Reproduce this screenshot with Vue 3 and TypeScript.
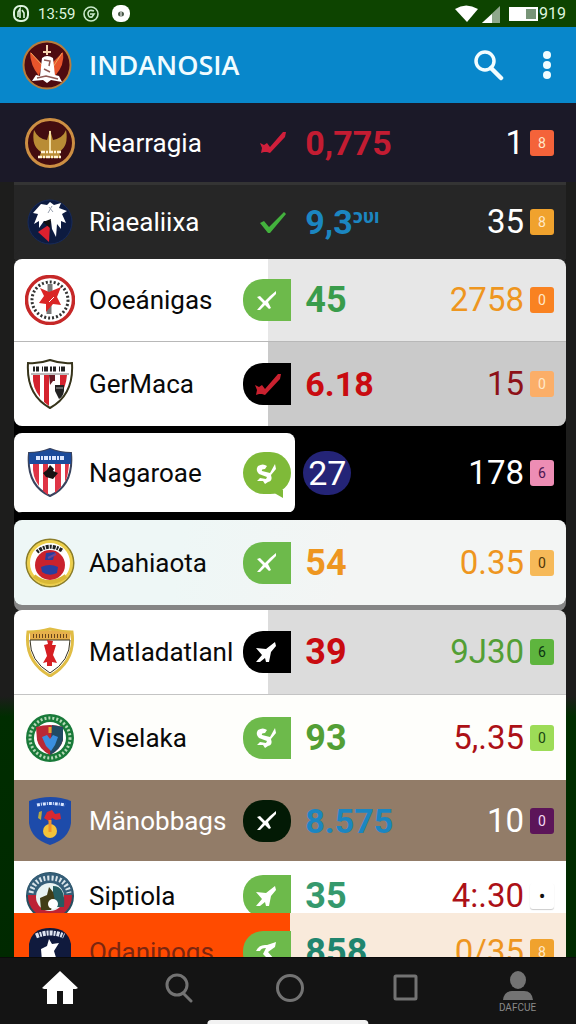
<script setup lang="ts">
type Mark = 'check' | 'cross' | 'tick' | 'scribble' | 'swirl' | 'open'
interface Row {
  id: string
  name: string
  crest: string
  badge: string
  mark: Mark
  value: string
  sup?: string
  valueTone: string
  amount: string
  amountTone: string
  chip: string
  chipTone: string
}

const lead: Row = {
  id: 'r1', name: 'Nearragia', crest: 'garuda', badge: 'bare-red', mark: 'check', value: '0,775',
  valueTone: 'crimson', amount: '1', amountTone: 'white', chip: '8', chipTone: 'coral',
}

const rows: Row[] = [
  { id: 'r2', name: 'Riaealiixa', crest: 'eagle', badge: 'bare-green', mark: 'tick', value: '9,3', sup: 'ɔυı', valueTone: 'blue', amount: '35', amountTone: 'white', chip: '8', chipTone: 'amber' },
  { id: 'r3', name: 'Ooeánigas', crest: 'redring', badge: 'green', mark: 'cross', value: '45', valueTone: 'green', amount: '2758', amountTone: 'orange', chip: '0', chipTone: 'orange-chip' },
  { id: 'r4', name: 'GerMaca', crest: 'stripes', badge: 'black', mark: 'check', value: '6.18', valueTone: 'red', amount: '15', amountTone: 'maroon', chip: '0', chipTone: 'peach' },
  { id: 'r5', name: 'Nagaroae', crest: 'bluestripes', badge: 'bubble', mark: 'swirl', value: '27', valueTone: 'disc', amount: '178', amountTone: 'white', chip: '6', chipTone: 'pink' },
  { id: 'r6', name: 'Abahiaota', crest: 'goldring', badge: 'green', mark: 'cross', value: '54', valueTone: 'orange', amount: '0.35', amountTone: 'orange', chip: '0', chipTone: 'gold' },
  { id: 'r7', name: 'Matladatlanl', crest: 'goldshield', badge: 'black', mark: 'scribble', value: '39', valueTone: 'red', amount: '9J30', amountTone: 'leaf', chip: '6', chipTone: 'green-chip' },
  { id: 'r8', name: 'Viselaka', crest: 'greenring', badge: 'green', mark: 'swirl', value: '93', valueTone: 'leaf', amount: '5,.35', amountTone: 'maroon', chip: '0', chipTone: 'lime' },
  { id: 'r9', name: 'Mänobbags', crest: 'blueshield', badge: 'pill', mark: 'cross', value: '8.575', valueTone: 'blue', amount: '10', amountTone: 'white', chip: '0', chipTone: 'purple' },
  { id: 'r10', name: 'Siptiola', crest: 'crown', badge: 'green', mark: 'scribble', value: '35', valueTone: 'teal', amount: '4:.30', amountTone: 'maroon', chip: '•', chipTone: 'blank' },
  { id: 'r11', name: 'Odanipogs', crest: 'navy', badge: 'green', mark: 'open', value: '858', valueTone: 'teal', amount: '0/35', amountTone: 'orange', chip: '8', chipTone: 'amber' },
]

const marks: Record<Mark, string> = {
  tick: 'M2 13 L6 11 L11 17 L26 2 L28 4 L12 23 L10 23 Z',
  check: 'M2 13 L6 15 L9 13 L12 17 L25 2 L28 2 L27 7 L12 23 L9 22 L6 22 L3 23 L4 18 Z',
  cross: 'M4 9 L7 8 L12 13 L17 8 L23 3 L23 6 L15 14 L18 20 L16 21 L12 17 L7 22 L4 22 L10 15 Z',
  scribble: 'M3 8 L13 9 L22 2 L23 6 L18 12 L16 22 L13 22 L12 18 L7 22 L3 22 L9 15 Z',
  swirl: 'M5 5 Q10 2 14 5 L12 8 Q8 8 9 10 L17 12 L22 3 L23 8 L18 14 Q20 20 15 21 L12 23 L10 20 L4 20 L7 17 L13 18 L14 16 L6 13 Q2 9 5 5 Z',
  open: 'M3 11 Q6 4 14 5 L23 2 L22 7 L15 12 L21 19 L19 23 L10 14 L13 8 Q8 8 7 11 Z',
}

const all = [lead, ...rows]
const isLong = (row: Row) => /[.,]/.test(row.value)
</script>

<template>
  <div class="screen">
    <header class="status">
      <div class="status-group">
        <svg width="18" height="18" viewBox="0 0 18 18" aria-hidden="true">
          <rect x="2" y="1" width="14" height="15" rx="6" fill="none" stroke="#dff5df" stroke-width="2" />
          <path d="M6 12 V7 L8 4 V13 M10 5 L12 8 V13" fill="none" stroke="#dff5df" stroke-width="1.6" />
        </svg>
        <span class="clock">13:59</span>
        <svg width="18" height="18" viewBox="0 0 18 18" aria-hidden="true">
          <circle cx="9" cy="9" r="7" fill="none" stroke="#c9e8c9" stroke-width="1.6" />
          <path d="M12 6 Q7 4 6 8 Q6 13 10 12 L12 9 H8" fill="none" stroke="#c9e8c9" stroke-width="1.6" />
        </svg>
        <svg class="dot" width="18" height="18" viewBox="0 0 18 18" aria-hidden="true">
          <rect width="18" height="17" rx="8" fill="#fff" />
          <ellipse cx="9" cy="9" rx="3" ry="2.5" fill="#4a5a4a" />
          <path d="M9 7 V11" stroke="#fff" />
        </svg>
      </div>
      <div class="status-group right">
        <svg width="46" height="20" viewBox="0 0 46 20" aria-hidden="true">
          <path d="M0 5 Q11 -2 23 5 L12 18 Z" fill="#fff" />
          <path d="M27 19 L45 2 V19 Z" fill="#8fa88c" />
          <path d="M27 19 L37 10 V19 Z" fill="#fff" />
        </svg>
        <svg class="battery" width="30" height="14" viewBox="0 0 30 14" aria-hidden="true">
          <rect x="1" y="1" width="27" height="12" fill="#779477" stroke="#fff" stroke-width="2" />
          <rect x="1" y="1" width="16" height="12" fill="#fff" />
        </svg>
        <span class="percent">919</span>
      </div>
    </header>

    <header class="appbar">
      <svg class="crest" viewBox="0 0 50 50" aria-hidden="true">
        <circle cx="25" cy="25" r="23.5" fill="#4e0b10" stroke="#b77d3e" stroke-width="2" />
        <path d="M8 12 L20 24 L17 36 Q8 25 8 12 Z M41 12 L31 22 L33 36 Q43 25 41 12 Z" fill="#e8552c" />
        <path d="M9 13 L20 25 M40 13 L31 27" stroke="#eda55c" />
        <path d="M25 5 V15 M21 12 H29" stroke="#f5d4b0" stroke-width="2" />
        <path d="M20 18 Q25 14 31 18 L33 35 L37 36 L40 42 L29 40 L25 43 L21 40 L10 41 L14 35 L18 36 Z" fill="#fff" />
        <path d="M22 20 L28 21 L27 26 M15 38 L24 36 L36 39 M22 29 L28 32" fill="none" stroke="#8e5a55" stroke-width="1.5" />
      </svg>
      <h1>INDANOSIA</h1>
      <button class="icon-button" aria-label="Search">
        <svg width="32" height="32" viewBox="0 0 32 32" aria-hidden="true">
          <circle cx="12" cy="12" r="9" fill="none" stroke="#f2fdff" stroke-width="3.5" />
          <path d="M18 19 L28 29" stroke="#f2fdff" stroke-width="4.5" stroke-linecap="round" />
        </svg>
      </button>
      <button class="icon-button more" aria-label="More options">
        <svg width="10" height="30" viewBox="0 0 10 30" aria-hidden="true">
          <circle cx="5" cy="5" r="4" fill="#f2fdff" /><circle cx="5" cy="15" r="4" fill="#f2fdff" /><circle cx="5" cy="25" r="4" fill="#f2fdff" />
        </svg>
      </button>
    </header>

    <main class="list">
      <section v-for="row in all" :key="row.id" class="row" :class="row.id">
        <div class="cells">
          <svg class="crest" viewBox="0 0 50 50" aria-hidden="true">
            <g v-if="row.crest === 'garuda'">
              <circle cx="25" cy="25" r="23.5" fill="#430d10" stroke="#cd8f43" stroke-width="3" />
              <path d="M9 12 Q13 21 22 22 L25 12 L28 22 Q38 20 41 12 Q44 28 34 34 L36 40 H14 L16 34 Q6 28 9 12 Z" fill="#b98c35" />
              <path d="M25 13 V34" stroke="#f2dca0" stroke-width="2" />
              <path d="M13 39 H37 M16 34 H36" stroke="#fff3d4" stroke-width="2.5" stroke-dasharray="4 1 2 1" />
            </g>
            <g v-else-if="row.crest === 'eagle'">
              <circle cx="25" cy="25" r="22" fill="#0d1b40" stroke="#172a5a" />
              <path d="M16 7 L22 8 L25 5 L29 8 L36 6 L34 11 L42 14 L37 17 L41 26 L36 24 L36 32 L32 27 L31 40 L27 32 L26 24 L19 24 L14 31 L14 24 L9 27 L13 17 L8 16 Z" fill="#fff" />
              <path d="M13 35 L25 27 L24 45 Z" fill="#dc202e" />
              <path d="M18 25 L26 22 L25 31 Z" fill="#111" />
              <path d="M24 10 L28 15 M27 9 L23 16" stroke="#9aa2b0" />
            </g>
            <g v-else-if="row.crest === 'redring'">
              <circle cx="25" cy="25" r="23.5" fill="#fff" stroke="#c62828" stroke-width="3.5" />
              <circle cx="25" cy="25" r="18" fill="none" stroke="#333" stroke-width="3" stroke-dasharray="2 2" />
              <path d="M25 9 V18 M24 30 V39" stroke="#777" stroke-width="5" />
              <path d="M15 13 L24 17 L36 12 L32 22 L36 30 L28 29 L21 37 L21 29 L14 28 L19 21 Z" fill="#da2525" />
              <path d="M24 27 L29 22" stroke="#fff" />
            </g>
            <g v-else-if="row.crest === 'stripes'">
              <path d="M3 4 Q14 5 25 1 Q36 5 47 4 Q49 36 25 49 Q1 36 3 4 Z" fill="#fff" stroke="#37341b" stroke-width="2" />
              <path d="M8 16 H15 V38 Q7 28 8 16 M19 16 H24 V47 L19 43 Z M35 16 H42 Q41 28 35 37 Z" fill="#d4232e" />
              <path d="M8 10 H42" stroke="#222" stroke-width="5" stroke-dasharray="2 1 3 3 1 1 4 2" /><path d="M6 15 H44" stroke="#777" />
              <path d="M24 16 H30 V22 H28 L25 26 Z" fill="#651923" /><path d="M30 26 H39 V32 Q38 38 34 40 L30 32 Z" fill="#222" />
              <path d="M31 29 H38" stroke="#aaa" />
            </g>
            <g v-else-if="row.crest === 'bluestripes'">
              <path d="M4 5 Q15 5 25 1 Q35 5 46 5 Q49 37 25 48 Q1 37 4 5 Z" fill="#fff" stroke="#39435e" stroke-width="2" />
              <path d="M4 5 Q15 5 25 1 Q35 5 46 5 V16 H4 Z" fill="#1c4b9b" />
              <path d="M8 16 H14 V38 Q7 29 8 16 M18 16 H23 V47 L18 43 M30 16 H36 V39 L30 45 M40 16 H44 Q43 29 40 34 Z" fill="#df3546" />
              <path d="M11 10 H40" stroke="#dbe6ff" stroke-width="4" stroke-dasharray="4 1 2 1" />
              <path d="M25 17 L29 21 L28 23 L33 25 L28 31 L21 29 L18 25 L22 22 Z" fill="#181313" />
            </g>
            <g v-else-if="row.crest === 'goldring'">
              <circle cx="25" cy="25" r="23.5" fill="#fff" stroke="#8b7d29" stroke-width="2" />
              <circle cx="25" cy="25" r="21.5" fill="none" stroke="#edcf4b" stroke-width="3" />
              <path d="M12 14 Q24 4 38 13" fill="none" stroke="#222" stroke-width="4" stroke-dasharray="2 1 3 1" />
              <path d="M9 38 Q24 50 41 38" fill="none" stroke="#d9b836" stroke-width="4" />
              <circle cx="25" cy="27" r="15" fill="#c9222d" />
              <path d="M16 29 Q25 25 33 29 L32 35 Q24 39 17 34 Z M21 15 L30 14 L28 22 L20 22 Z" fill="#283fa0" />
              <path d="M23 20 L31 16" stroke="#6a4796" stroke-width="2" />
            </g>
            <g v-else-if="row.crest === 'goldshield'">
              <path d="M3 5 Q15 5 25 2 Q36 5 47 5 Q51 34 25 49 Q-1 34 3 5 Z" fill="#fff" stroke="#e0bd45" stroke-width="3" />
              <path d="M5 6 Q24 1 46 6 L45 13 H5 Z" fill="#e6b04b" /><path d="M8 9 H42" stroke="#68451b" stroke-width="4" stroke-dasharray="1 2" />
              <path d="M5 13 H45 Q45 34 25 46 Q5 34 5 13 Z" fill="none" stroke="#37321f" />
              <path d="M22 13 L28 14 L27 18 L31 18 L28 28 L32 36 L27 35 L27 39 H22 L22 35 L18 36 L22 29 L19 18 L23 17 Z" fill="#d61e22" />
            </g>
            <g v-else-if="row.crest === 'greenring'">
              <circle cx="25" cy="25" r="24" fill="#197a39" />
              <circle cx="25" cy="25" r="20" fill="none" stroke="#b5d9b6" stroke-width="3" stroke-dasharray="2 2" />
              <circle cx="25" cy="25" r="16" fill="#fff" />
              <path d="M11 14 Q25 10 38 14 V27 Q36 36 25 42 Q14 36 12 27 Z" fill="#b92935" />
              <path d="M27 12 L38 14 V27 Q35 37 25 42 Z" fill="#214a63" />
              <path d="M17 24 L22 22 L25 26 L28 22 L33 24 L30 32 L26 38 L21 33 Z" fill="#3a8fe0" /><path d="M25 14 V20" stroke="#e2ab30" stroke-width="3" />
            </g>
            <g v-else-if="row.crest === 'blueshield'">
              <path d="M4 5 Q26 -3 46 5 V27 Q44 43 25 49 Q6 43 4 27 Z" fill="#1d4baa" />
              <path d="M12 9 Q25 6 40 9" fill="none" stroke="#d8e5ff" stroke-width="3" stroke-dasharray="3 1 1 1" />
              <path d="M22 16 L27 14 L30 18 L35 17 L36 23 L31 24 L27 22 L25 26 L19 22 Z" fill="#da2831" /><ellipse cx="25" cy="35" rx="7" ry="7" fill="#f3c33a" />
              <path d="M14 16 L17 15 L16 24 L13 22 Z" fill="#b9a942" /><path d="M25 24 V36" stroke="#ef922b" stroke-width="3" />
            </g>
            <g v-else-if="row.crest === 'crown'">
              <circle cx="25" cy="25" r="23" fill="#bd2335" stroke="#254e60" stroke-width="2" />
              <path d="M2 24 Q3 2 25 2 Q47 2 48 24 Z" fill="#355e78" />
              <path d="M6 22 Q9 7 25 7 Q41 7 44 22" fill="none" stroke="#dae5ea" stroke-width="5" stroke-dasharray="2 2" />
              <circle cx="25" cy="26" r="14" fill="#e8f3f2" /><path d="M28 15 Q41 15 39 36 H28 Z" fill="#245d62" />
              <path d="M24 16 L28 21 L30 30 L26 39 H16 L15 27 L22 24 Z" fill="#403d17" /><circle cx="28" cy="33" r="5" fill="#fff" />
            </g>
            <g v-else>
              <path d="M4 17 Q7 1 25 1 Q43 1 46 17 V49 H4 Z" fill="#101a3d" />
              <path d="M11 9 Q25 3 39 9" fill="none" stroke="#dfe5f1" stroke-width="5" stroke-dasharray="3 1 2 1" />
              <path d="M24 12 L27 17 L34 16 L29 24 L32 34 H17 L16 22 L22 19 Z" fill="#fff" />
            </g>
          </svg>

          <span class="name">{{ row.name }}</span>

          <span class="badge" :class="row.badge">
            <svg width="28" height="25" viewBox="0 0 28 25" aria-hidden="true">
              <path :d="marks[row.mark]" fill="currentColor" />
            </svg>
          </span>

          <div class="figures">
            <strong class="value" :class="[row.valueTone, { long: isLong(row) }]">{{ row.value }}<sup v-if="row.sup">{{ row.sup }}</sup></strong>
            <span class="amount" :class="row.amountTone">{{ row.amount }}</span>
            <span class="chip" :class="row.chipTone">{{ row.chip }}</span>
          </div>
        </div>
      </section>
    </main>

    <nav class="nav">
      <button class="nav-item" aria-label="Home">
        <svg width="36" height="34" viewBox="0 0 36 34" aria-hidden="true">
          <path d="M18 0 L36 17 L34 18 H31 V33 H21 V20 H15 V33 H5 V18 H2 L0 17 Z" fill="#fff" />
        </svg>
      </button>
      <button class="nav-item" aria-label="Search">
        <svg width="28" height="30" viewBox="0 0 28 30" aria-hidden="true">
          <circle cx="12" cy="12" r="10" fill="none" stroke="#737373" stroke-width="3" />
          <path d="M18 20 L26 28" stroke="#737373" stroke-width="3" stroke-linecap="round" />
        </svg>
      </button>
      <button class="nav-item" aria-label="Record">
        <svg width="28" height="28" viewBox="0 0 28 28" aria-hidden="true"><circle cx="14" cy="14" r="12.5" fill="none" stroke="#737373" stroke-width="3" /></svg>
      </button>
      <button class="nav-item" aria-label="Recent">
        <svg width="26" height="28" viewBox="0 0 26 28" aria-hidden="true"><rect x="2" y="2" width="21" height="23" rx="1" fill="none" stroke="#737373" stroke-width="3" /></svg>
      </button>
      <button class="nav-item profile">
        <svg width="30" height="29" viewBox="0 0 30 29" aria-hidden="true">
          <ellipse cx="15" cy="9" rx="8" ry="9" fill="#737373" />
          <path d="M0 29 Q1 20 9 20 H21 Q29 20 30 29 Z" fill="#737373" />
        </svg>
        <span>DAFCUE</span>
      </button>
      <span class="handle"></span>
    </nav>
  </div>
</template>

<style>
body { margin: 0; background: #141414; }
</style>

<style scoped>
.screen {
  display: flex; flex-direction: column; height: 100vh; overflow: hidden;
  font-family: Roboto, "Noto Sans", sans-serif;
  background: linear-gradient(#1d1d1c 0, #1d1d1c 68%, #002d00 70%, #002800 100%);
}
button { border: 0; padding: 0; margin: 0; background: none; font: inherit; color: inherit; display: flex; align-items: center; justify-content: center; }
svg { display: block; flex: none; }

.status { flex: none; height: 27px; padding: 0 10px 0 12px; display: flex; justify-content: space-between; align-items: center; background: #0d4400; color: #dff5df; }
.status-group { display: flex; align-items: center; height: 23px; gap: 8px; }
.clock { font-size: 15px; width: 35px; line-height: 20px; white-space: nowrap; margin-right: 1px; }
.dot { margin-left: 4px; }
.status-group.right { gap: 0; }
.battery { margin-left: 8px; }
.percent { font-size: 16px; line-height: 20px; }

.appbar { flex: none; height: 76px; padding: 0 20px 0 22px; display: flex; align-items: center; background: #0887cb; }
.crest { width: 50px; height: 50px; }
.appbar h1 { flex: 1; margin: 0 0 0 17px; font-family: "Open Sans", sans-serif; font-size: 27px; font-weight: 600; line-height: 40px; color: #f0fcff; }
.more { margin-left: 33px; padding: 0 4px; }

.list { flex: 1; min-height: 0; overflow: hidden; display: flex; flex-direction: column; }
.row { flex: none; margin: 0 10px 0 14px; overflow: hidden; color: #090909; }
.cells { height: 100%; box-sizing: border-box; padding: 0 12px 0 11px; display: grid; grid-template-columns: 50px minmax(0, 140fr) 48px minmax(0, 248fr); column-gap: 14px; align-items: center; }
.cells > * { grid-row: 1; }
.cells > .crest { grid-column: 1; }
.name { grid-column: 2; font-size: 26px; line-height: 34px; white-space: nowrap; }
.badge { grid-column: 3; }
.figures { grid-column: 4; }

.r1 { height: 79px; margin: 0; padding: 0 10px 0 14px; background: #1b1928; color: #fff; }
.r2 { height: 74px; border-top: 3px solid #343434; background: #262626; color: #fff; }
.r3 { height: 82px; border-bottom: 1px solid #b8b8b8; border-radius: 8px 8px 0 0; background: linear-gradient(90deg, #fff 46%, #e7e7e7 46%); box-shadow: 0 -10px 0 -1px #262626; }
.r4 { height: 84px; border-radius: 0 0 8px 8px; background: linear-gradient(90deg, #fff 46%, #cacaca 46%); box-shadow: 0 10px 0 #000; }
.r5 { height: 94px; background: #000; }
.r5 .cells { height: 80px; margin: 7px 0; }
.r5 .cells::before { content: ""; grid-row: 1; grid-column: 1 / 4; align-self: stretch; margin: 0 -4px 0 -11px; height: 80px; border-radius: 8px; background: #fff; }
.r6 { height: 85px; border-radius: 8px; background: linear-gradient(100deg, #eef7f6 30%, #f3f5f4 60%); box-shadow: 0 6px 0 #858585, 0 -8px 0 #000; }
.r7 { height: 84px; margin-top: 5px; border-bottom: 1px solid #c4c4c4; border-radius: 8px 8px 0 0; background: linear-gradient(90deg, #fff 46%, #dcdcdc 46%); }
.r8 { height: 85px; background: #fefefb; }
.r9 { height: 81px; background: #927c68; color: #fff; }
.r10 { height: 52px; background: #fff; }
.r10 .cells { height: 70px; }
.r11 { height: 78px; background: linear-gradient(90deg, #ff4b00 50%, #f9eadb 50%); color: #7b2610; }

.badge { height: 42px; display: flex; align-items: center; justify-content: center; color: #fff; }
.bare-red { color: #d01f3b; padding-left: 9px; }
.bare-green { color: #43b13d; padding-left: 9px; }
.green { background: #6dba4b; border-radius: 20px 0 0 20px; }
.black { background: #000; border-radius: 20px 0 0 20px; }
.r4 .black { color: #c9212f; }
.pill { background: #031a05; border-radius: 20px; }
.bubble { position: relative; background: #7fba39; border-radius: 21px; }
.bubble::after { content: ""; position: absolute; right: 8px; bottom: -4px; border-top: 8px solid #7fba39; border-left: 14px solid transparent; }

.figures { display: flex; align-items: center; min-width: 0; }
.value { font-size: 36px; font-weight: 700; line-height: 44px; white-space: nowrap; flex: 1; }
.value.long { font-size: 34px; }
.value sup { font-size: 20px; line-height: 20px; vertical-align: 11px; }
.value.disc { flex: none; width: 48px; margin-right: auto; margin-left: -2px; text-align: center; border-radius: 22px; background: #242477; color: #fff; font-size: 34px; font-weight: 400; }
.amount { font-size: 33px; line-height: 40px; white-space: nowrap; }
.chip { flex: none; margin-left: 6px; width: 24px; height: 26px; border-radius: 3px; font-size: 14px; line-height: 26px; text-align: center; color: #ffe9c8; }

.crimson { color: #c31c32; }
.blue { color: #1b86c1; }
.green.value { background: none; color: #3a9c4b; }
.red { color: #c90b10; }
.orange { color: #ee961f; }
.maroon { color: #ac1016; }
.leaf { color: #539f35; }
.teal { color: #35996d; }
.r11 .teal { color: #20856e; }
.white { color: #fff; }
.r4 .maroon { color: #8d1118; }

.coral { background: #f4633a; }
.amber { background: #f0a22d; }
.orange-chip { background: #f98221; }
.peach { background: #fbae68; }
.pink { background: #ed8db4; color: #4c1452; }
.gold { background: #f6b958; color: #4f3508; }
.green-chip { background: #5eb53e; color: #0b3413; }
.lime { background: #9ddc57; color: #194512; }
.purple { background: #5c1559; color: #f5d9f3; }
.blank { background: #fff; color: #111; font-size: 20px; box-shadow: 0 1px 1px #ccc; }

.nav { position: relative; flex: none; height: 67px; padding-right: 11px; box-sizing: border-box; display: grid; grid-template-columns: 120fr 118fr 104fr 128fr 95fr; align-items: start; background: #141414; border-top: 1px solid #0b0b0b; }
.nav-item { height: 60px; }
.profile { flex-direction: column; gap: 3px; padding-top: 8px; color: #8a8a8a; }
.profile span { font-size: 10px; line-height: 10px; }
.handle { position: absolute; bottom: 0; left: 50%; width: 28%; height: 4px; border-radius: 4px 4px 0 0; background: #f2f2f2; transform: translateX(-50%); }
</style>
